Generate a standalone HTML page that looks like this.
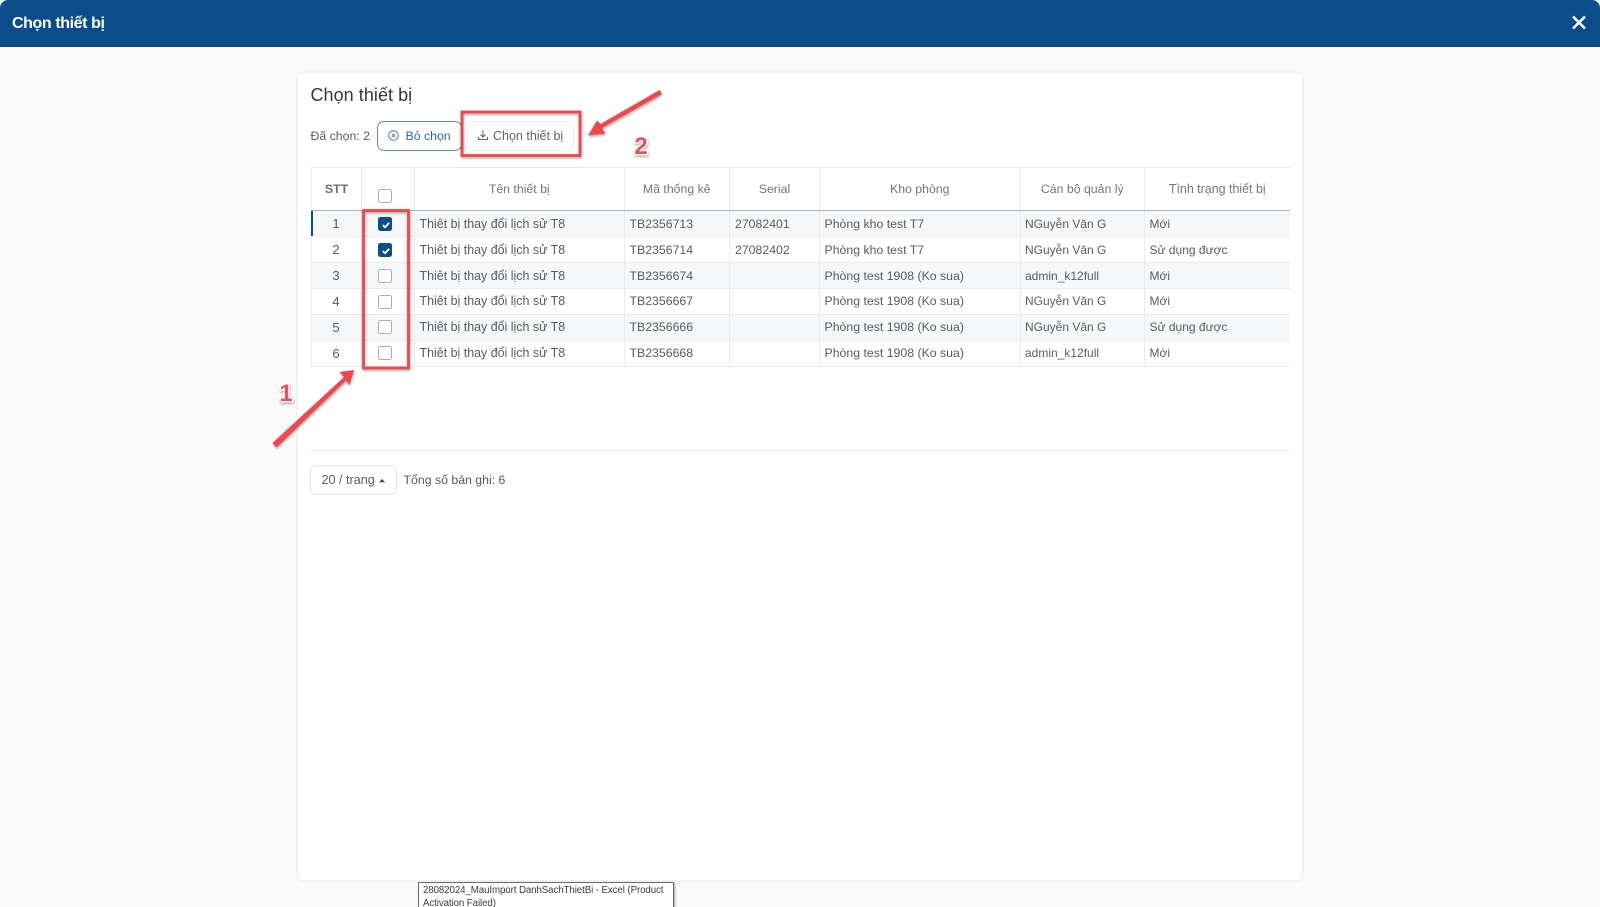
<!DOCTYPE html>
<html><head><meta charset="utf-8">
<style>
*{box-sizing:border-box}
html,body{margin:0;padding:0;width:1600px;height:907px;overflow:hidden;background:#fafafa;font-family:"Liberation Sans","Noto Sans CJK SC",sans-serif;color:#555b63}
#w{position:absolute;left:0;top:0;width:1600px;height:907px;overflow:hidden;filter:blur(.3px)}
.a{position:absolute;white-space:nowrap}
#head{left:0;top:0;width:1600px;height:47px;background:#0a4d8a;border-radius:8px 8px 0 0}
#card{left:298px;top:73px;width:1004px;height:807px;background:#fff;border-radius:6px;box-shadow:0 0 5px rgba(0,0,0,.09)}
table{position:absolute;left:311px;top:167px;border-collapse:collapse;table-layout:fixed;font-size:12.3px}
th{height:43px;font-weight:400;color:#70767d;text-align:center;border:1px solid #e9ebee;border-bottom:1px solid #aeb2b9;padding:0}
th:last-child,td:last-child{border-right:0}
td{height:26px;padding:0 0 0 4.5px;border:1px solid #e9ebee;color:#565c64}
tr.u td{padding-bottom:1px}
td:nth-child(3){font-size:12.45px}
td:nth-child(7),td:nth-child(8){font-size:12px}
td:nth-child(4),td:nth-child(5){padding-left:5px}
tr.o td{background:#f5f7f9}
td.c{text-align:center;padding:0 1px 1px 0;font-size:13px}
.cb{position:absolute;left:378px;width:14px;height:14px;border:1px solid #a9adb2;border-radius:2.5px;background:#fff}
.cb.on{background:#0a4d8a;border-color:#0a4d8a}
.cb svg{position:absolute;left:1px;top:1px}
.btn{height:30px;top:120.5px;border-radius:7px;background:#fff;font-size:12.3px;line-height:28px}
</style></head>
<body>
<div id="w">
<div class="a" id="head"></div>
<div class="a" style="left:12px;top:14px;font-size:16px;line-height:20px;font-weight:700;color:#fff;letter-spacing:-.4px">Chọn thiết bị</div>
<svg class="a" style="left:1571px;top:14px" width="16" height="16" viewBox="0 0 16 16"><path d="M2 2.5L14 14.5M14 2.5L2 14.5" stroke="#fff" stroke-width="2.5" fill="none"/></svg>

<div class="a" id="card"></div>
<div class="a" style="left:310.5px;top:84px;font-size:18px;line-height:22px;color:#33383e;letter-spacing:.05px">Chọn thiết bị</div>
<div class="a" style="left:310.5px;top:128.5px;font-size:12.3px;line-height:15px;color:#555b63">Đã chọn: 2</div>

<div class="a btn" style="left:376.5px;width:85px;border:1px solid #5f90bb;color:#2f689c;padding-left:28px">Bỏ chọn</div>
<svg class="a" style="left:387px;top:129px" width="13" height="13" viewBox="0 0 13 13" fill="none" stroke="#4f83b0"><circle cx="6.5" cy="6.5" r="4.8"/><path d="M5 5L8 8M8 5L5 8"/></svg>
<div class="a btn" style="left:467px;width:107px;border:1px solid #eceef0;color:#5f656c;padding-left:25px;font-size:12.5px">Chọn thiết bị</div>
<svg class="a" style="left:477px;top:129px" width="12" height="12" viewBox="0 0 12 12" fill="none" stroke="#5f656c"><path d="M6 1V8M3.5 5.5L6 8L8.5 5.5M1.5 8V10.5H10.5V8"/></svg>

<table style="width:978px">
<colgroup><col style="width:50px"><col style="width:53px"><col style="width:209.5px"><col style="width:105.5px"><col style="width:90px"><col style="width:200.5px"><col style="width:124.5px"><col style="width:145px"></colgroup>
<tr><th style="font-weight:700;color:#6a7077">STT</th><th></th><th>Tên thiết bị</th><th>Mã thống kê</th><th>Serial</th><th>Kho phòng</th><th>Cán bộ quản lý</th><th style="font-size:12.45px">Tình trạng thiết bị</th></tr>
<tr class="o"><td class="c">1</td><td></td><td>Thiêt bị thay đổi lịch sử T8</td><td>TB2356713</td><td>27082401</td><td>Phòng kho test T7</td><td>NGuyễn Văn G</td><td>Mới</td></tr>
<tr><td class="c">2</td><td></td><td>Thiêt bị thay đổi lịch sử T8</td><td>TB2356714</td><td>27082402</td><td>Phòng kho test T7</td><td>NGuyễn Văn G</td><td>Sử dụng được</td></tr>
<tr class="o"><td class="c">3</td><td></td><td>Thiêt bị thay đổi lịch sử T8</td><td>TB2356674</td><td></td><td>Phòng test 1908 (Ko sua)</td><td>admin_k12full</td><td>Mới</td></tr>
<tr class="u"><td class="c">4</td><td></td><td>Thiêt bị thay đổi lịch sử T8</td><td>TB2356667</td><td></td><td>Phòng test 1908 (Ko sua)</td><td>NGuyễn Văn G</td><td>Mới</td></tr>
<tr class="o u"><td class="c">5</td><td></td><td>Thiêt bị thay đổi lịch sử T8</td><td>TB2356666</td><td></td><td>Phòng test 1908 (Ko sua)</td><td>NGuyễn Văn G</td><td>Sử dụng được</td></tr>
<tr class="u"><td class="c">6</td><td></td><td>Thiêt bị thay đổi lịch sử T8</td><td>TB2356668</td><td></td><td>Phòng test 1908 (Ko sua)</td><td>admin_k12full</td><td>Mới</td></tr>
</table>
<div class="a" style="left:311px;top:211px;width:2px;height:25px;background:#0a4d8a"></div>

<div class="a cb" style="top:188.5px"></div>
<div class="a cb on" style="top:216.5px"><svg width="12" height="12" viewBox="0 0 12 12" fill="none" stroke="#fff" stroke-width="1.8"><path d="M2.8 6L5 8.2L9.2 3.8"/></svg></div>
<div class="a cb on" style="top:242.5px"><svg width="12" height="12" viewBox="0 0 12 12" fill="none" stroke="#fff" stroke-width="1.8"><path d="M2.8 6L5 8.2L9.2 3.8"/></svg></div>
<div class="a cb" style="top:268.5px"></div>
<div class="a cb" style="top:294.5px"></div>
<div class="a cb" style="top:320px"></div>
<div class="a cb" style="top:346px"></div>

<div class="a" style="left:310px;top:450px;width:980px;height:1px;background:#e9ebee"></div>
<div class="a" style="left:310px;top:465px;width:86.5px;height:30px;border:1px solid #e2e4e7;border-radius:6px;background:#fff;font-size:12.6px;line-height:28px;padding-left:10.5px;color:#5a6068">20 / trang</div>
<svg class="a" style="left:378px;top:478px" width="8" height="5" viewBox="0 0 8 5"><path d="M.8 4.2L4 1L7.2 4.2Z" fill="#444a50"/></svg>
<div class="a" style="left:403.5px;top:473px;font-size:12.3px;line-height:15px;color:#555b63">Tổng số bản ghi: 6</div>

<div class="a" style="left:418px;top:881.5px;width:256px;height:27px;background:#fff;border:1px solid #6b6b6b;box-shadow:1px 1px 2px rgba(0,0,0,.35);font-size:9.7px;line-height:13px;padding:1px 4px;color:#3d3d3d;white-space:nowrap;overflow:hidden;letter-spacing:-.08px">28082024_MauImport DanhSachThietBi - Excel (Product<br>Activation Failed)</div>

<svg class="a" style="left:0;top:0" width="1600" height="907" viewBox="0 0 1600 907">
<defs><filter id="s" x="-20%" y="-20%" width="140%" height="140%"><feDropShadow dx="0.5" dy="1.5" stdDeviation="1.2" flood-color="#000" flood-opacity=".35"/></filter></defs>
<g filter="url(#s)" fill="none" stroke="#f0464e" stroke-width="2.8">
<rect x="363.5" y="210.5" width="45" height="157.5"/>
<rect x="462" y="112" width="118" height="43.5"/>
</g>
<g filter="url(#s)" fill="#f0464e">
<path d="M272.5 443L344 377L339.5 372L354 370L349.5 385L346 380.5L276.5 447.5Z"/>
<path d="M662 94L602 128L605.5 133.5L588 135.5L597 120.5L600.5 124L659.5 90Z"/>
</g>
<g font-family="Liberation Sans, sans-serif" font-size="24" font-weight="700" filter="url(#s)" fill="#ef5058" stroke="#fff" stroke-width="2.6" paint-order="stroke" text-anchor="middle">
<text x="286" y="401">1</text>
<text x="641" y="154">2</text>
</g>
</svg>
</div>
</body></html>
